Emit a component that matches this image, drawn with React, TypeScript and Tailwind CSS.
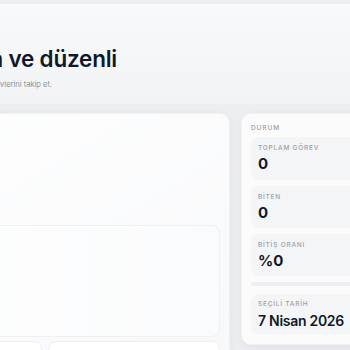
import React from "react";

const font = { fontFamily: "Inter, 'Noto Sans', sans-serif" };

function Stat({ label, value, h = "h-[43px]" }: { label: string; value: string; h?: string }) {
  return (
    <div className={`${h} rounded-[8px] bg-[#f4f5f7] pl-[7px] pt-[7px]`}>
      <div className="text-[6.5px] leading-[8px] tracking-[0.12em] text-[#9aa0aa] font-medium">{label}</div>
      <div className="mt-[4px] text-[15px] leading-[16px] font-bold text-[#111827]">{value}</div>
    </div>
  );
}

export default function App() {
  return (
    <div className="w-[350px] h-[350px] overflow-hidden bg-[#eceef1]" style={font}>
      <div className="pt-[4px]">
        <div className="h-[100px] border-t border-[#fbfcfd] bg-gradient-to-b from-[#f8f9fb] to-[#f1f3f5] pt-[41px]">
          <div className="w-[117px] overflow-hidden flex justify-end">
            <h1 className="whitespace-nowrap text-[22.5px] leading-[26px] font-semibold text-[#111827] tracking-[-0.01em]">
              Görevlerini planla ve düzenli
            </h1>
          </div>
          <div className="mt-[8px] w-[52px] overflow-hidden flex justify-end">
            <p className="whitespace-nowrap text-[7.5px] leading-[10px] text-[#8b919b]">
              Günlük görevlerini takip et.
            </p>
          </div>
        </div>
      </div>
      <div className="mt-[9px] flex gap-[11px] -ml-[200px]">
        <div className="w-[430px] shrink-0 h-[260px] rounded-[10px] bg-gradient-to-br from-[#ffffff] to-[#f7f8fa] border border-[#f1f2f4] shadow-[0_2px_8px_rgba(15,23,42,0.06)] pr-[9px] pt-[111px]">
          <div className="h-[112px] rounded-[8px] border border-[#eef0f2] bg-gradient-to-r from-[#ffffff] to-[#fafbfc]" />
          <div className="mt-[4px] flex gap-[6px]">
            <div className="w-[241px] h-[30px] rounded-[8px] border border-[#eceef1] bg-white" />
            <div className="flex-1 h-[30px] rounded-[8px] border border-[#eceef1] bg-white" />
          </div>
        </div>
        <div className="w-[130px] shrink-0 h-[232px] rounded-[10px] bg-[#fbfbfc] border border-[#f1f2f4] shadow-[0_2px_8px_rgba(15,23,42,0.06)] pl-[9px] pt-[10px]">
          <div className="text-[6.5px] leading-[8px] tracking-[0.14em] text-[#9aa0aa] font-medium">DURUM</div>
          <div className="mt-[5px] flex flex-col gap-[6px]">
            <Stat label="TOPLAM GÖREV" value="0" />
            <Stat label="BİTEN" value="0" h="h-[42px]" />
            <Stat label="BİTİŞ ORANI" value="%0" h="h-[42px]" />
          </div>
          <div className="mt-[6px] h-[4px] rounded-full bg-[#eceef1]" />
          <div className="mt-[8px] h-[40px] rounded-[8px] bg-[#f4f5f7] pl-[7px] pt-[6px]">
            <div className="text-[6.5px] leading-[8px] tracking-[0.12em] text-[#9aa0aa] font-medium">SEÇİLİ TARİH</div>
            <div className="mt-[3px] text-[14px] leading-[19px] font-semibold text-[#111827] tracking-[-0.02em]">7 Nisan 2026</div>
          </div>
        </div>
      </div>
    </div>
  );
}
